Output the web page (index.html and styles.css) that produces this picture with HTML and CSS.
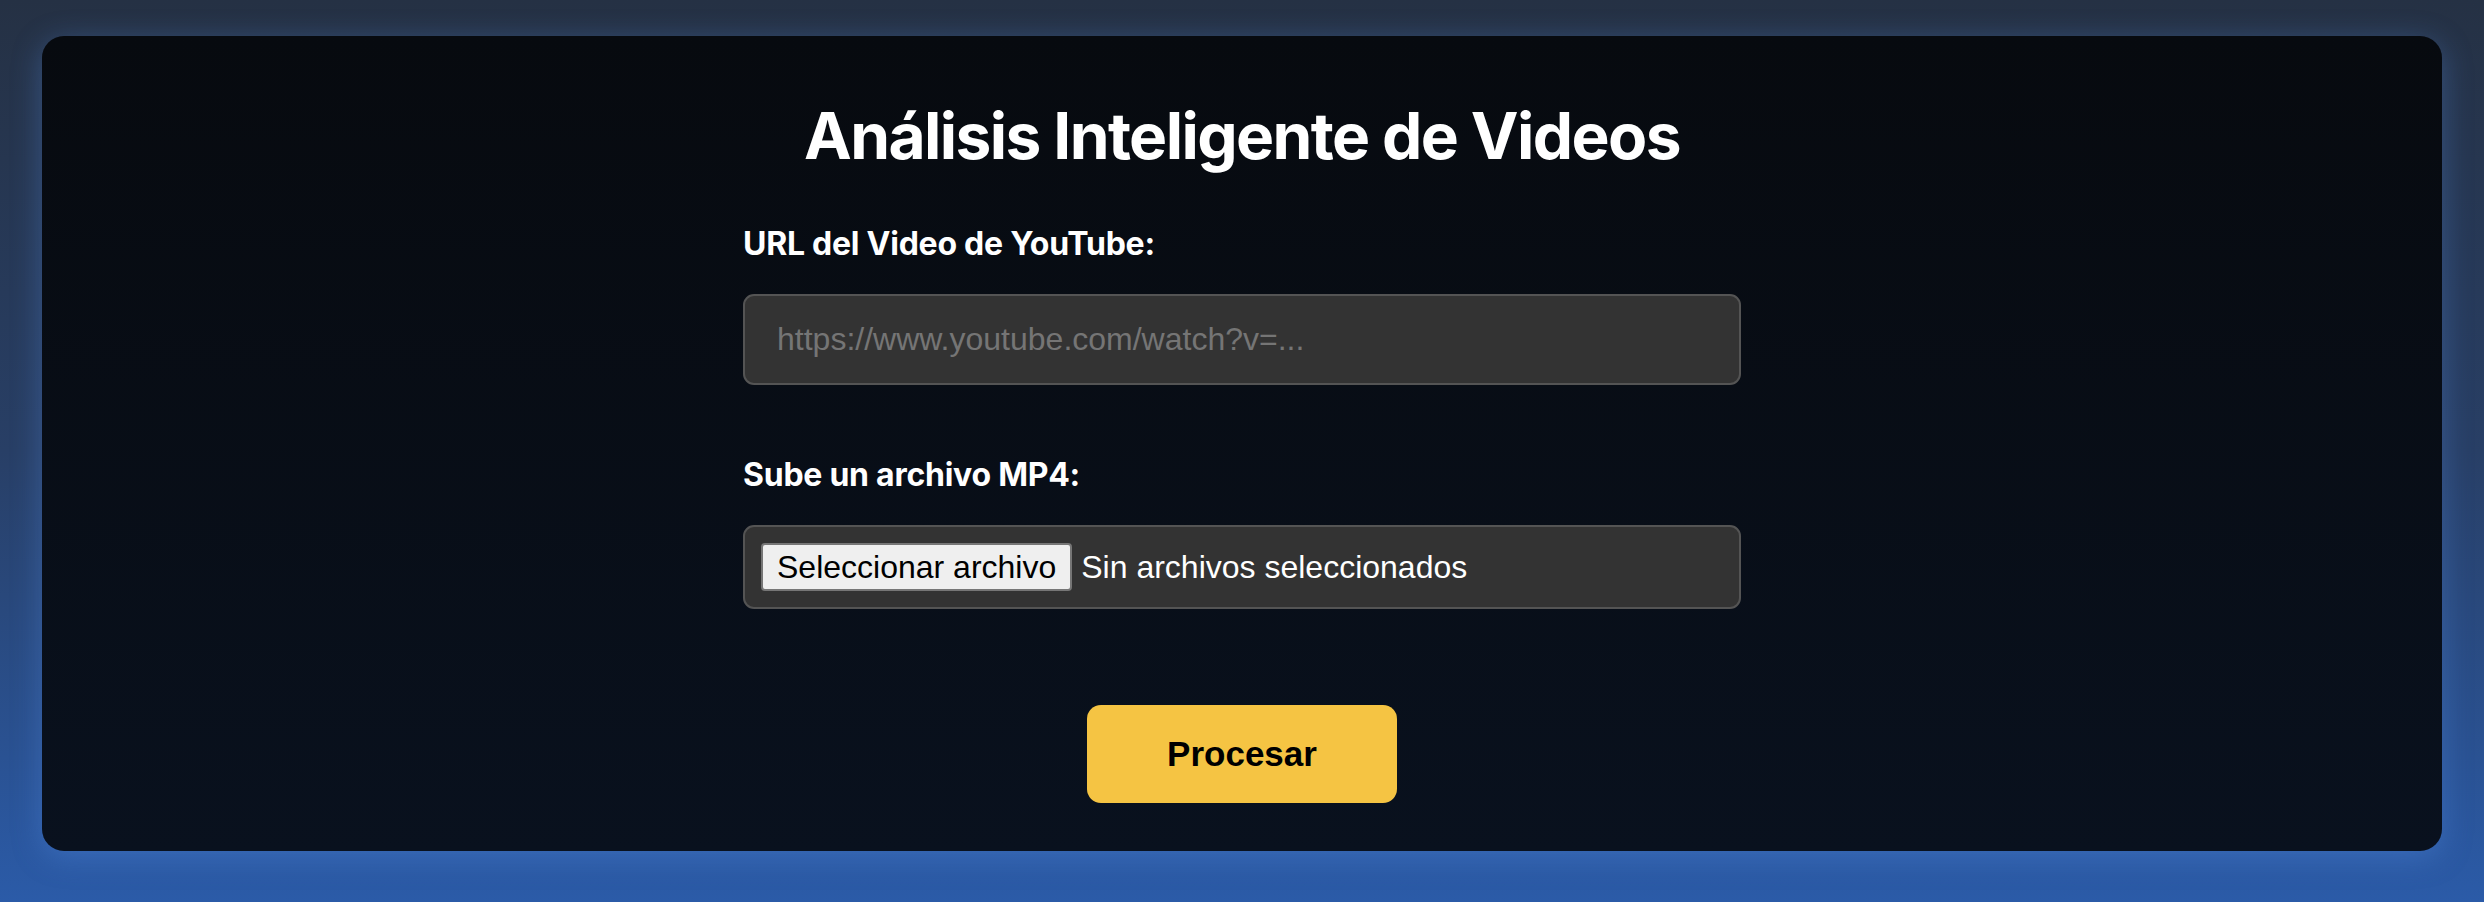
FILE: index.html
```html
<!DOCTYPE html>
<html lang="es">
<head>
<meta charset="utf-8">
<title>Análisis Inteligente de Videos</title>
<link rel="stylesheet" href="styles.css">
</head>
<body>
  <main class="card">
    <h1 class="title">Análisis Inteligente de Videos</h1>
    <form class="form">
      <div class="field">
        <label class="label" for="url">URL del Video de YouTube:</label>
        <input class="text-input" id="url" type="text" placeholder="https://www.youtube.com/watch?v=...">
      </div>
      <div class="field">
        <span class="label">Sube un archivo MP4:</span>
        <div class="file-field">
          <button type="button" class="file-btn">Seleccionar archivo</button>
          <span class="file-status">Sin archivos seleccionados</span>
        </div>
      </div>
      <div class="actions">
        <button type="button" class="submit">Procesar</button>
      </div>
    </form>
  </main>
</body>
</html>
```
FILE: styles.css
```css
* { box-sizing: border-box; }

html, body { height: 100%; }

body {
  margin: 0;
  padding: 36px 42px 51px 42px;
  background: linear-gradient(to bottom, #253144 0%, #283f66 50%, #2b5ba8 100%);
  font-family: "Inter", "Liberation Sans", sans-serif;
  color: #ffffff;
}

.card {
  height: 815px;
  border-radius: 22px;
  background: linear-gradient(to bottom, #070a0f 0%, #09111e 100%);
  box-shadow: 0 6px 30px rgba(90, 145, 235, 0.35);
  padding: 61px 0 0 0;
  display: flex;
  flex-direction: column;
  align-items: center;
}

.title {
  margin: 0;
  font-family: "Inter", sans-serif;
  font-weight: 700;
  font-size: 64px;
  line-height: 77px;
  letter-spacing: -1.6px;
  color: #ffffff;
}

.form {
  width: 998px;
  margin-top: 50px;
  display: flex;
  flex-direction: column;
}

.field {
  display: flex;
  flex-direction: column;
  gap: 31px;
  margin-bottom: 70px;
}

.field + .field { margin-bottom: 0; }

.label {
  font-family: "Inter", sans-serif;
  font-weight: 700;
  font-size: 32px;
  line-height: 39px;
  letter-spacing: -0.25px;
  color: #ffffff;
}

.text-input {
  height: 91px;
  width: 100%;
  padding: 0 32px;
  background: #333333;
  border: 2px solid #545454;
  border-radius: 11px;
  color: #ffffff;
  font-family: "Liberation Sans", Arial, sans-serif;
  font-size: 32px;
  outline: none;
}

.text-input::placeholder { color: #757575; }

.file-field {
  height: 84px;
  display: flex;
  align-items: center;
  gap: 9px;
  padding: 0 16px;
  background: #333333;
  border: 2px solid #545454;
  border-radius: 11px;
}

.file-btn {
  height: 48px;
  padding: 0 14px;
  background: #efefef;
  border: 2px solid #767676;
  border-radius: 4px;
  color: #000000;
  font-family: "Liberation Sans", Arial, sans-serif;
  font-size: 32px;
}

.file-status {
  font-family: "Liberation Sans", Arial, sans-serif;
  font-size: 32px;
  color: #ffffff;
}

.actions {
  display: flex;
  justify-content: center;
  margin-top: 96px;
}

.submit {
  width: 310px;
  height: 98px;
  background: #f5c443;
  border: none;
  border-radius: 14px;
  color: #000000;
  font-family: "Liberation Sans", Arial, sans-serif;
  font-weight: 700;
  font-size: 35px;
}
```
